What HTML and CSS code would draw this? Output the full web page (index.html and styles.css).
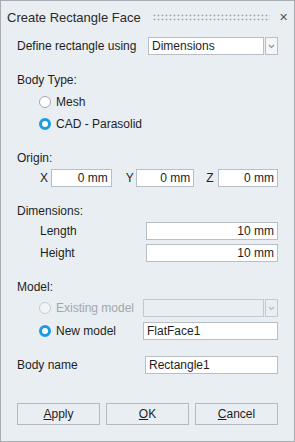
FILE: index.html
```html
<!DOCTYPE html>
<html>
<head>
<meta charset="utf-8">
<link rel="stylesheet" href="styles.css">
</head>
<body>
<div class="dialog">
  <div class="titlebar">
    <span class="title">Create Rectangle Face</span>
    <span class="grip"></span>
    <span class="close">&#x2715;</span>
  </div>
  <div class="content">
    <div class="row r-define">
      <span class="lbl define-lbl">Define rectangle using</span>
      <div class="combo define-combo"><span class="combo-text">Dimensions</span><span class="combo-btn"><svg width="7" height="5" viewBox="0 0 7 5"><path d="M1 1 L3.5 3.5 L6 1" fill="none" stroke="#8a9299" stroke-width="1.1"/></svg></span></div>
    </div>
    <div class="row head r-bodytype">Body Type:</div>
    <div class="row radio-row r-mesh"><span class="radio"></span><span>Mesh</span></div>
    <div class="row radio-row r-cad"><span class="radio on"></span><span>CAD - Parasolid</span></div>
    <div class="row head r-origin">Origin:</div>
    <div class="row origin-row">
      <span class="axis ax-x">X</span><div class="field num fx">0 mm</div>
      <span class="axis ax-y">Y</span><div class="field num fy">0 mm</div>
      <span class="axis ax-z">Z</span><div class="field num fz">0 mm</div>
    </div>
    <div class="row head r-dim">Dimensions:</div>
    <div class="row dim-row r-len"><span class="sub-lbl">Length</span><div class="field num dimf">10 mm</div></div>
    <div class="row dim-row r-hgt"><span class="sub-lbl">Height</span><div class="field num dimf">10 mm</div></div>
    <div class="row head r-model">Model:</div>
    <div class="row radio-row model-row r-exist"><span class="radio dis"></span><span class="dis-text mlbl">Existing model</span><div class="combo model-combo disabled"><span class="combo-text"></span><span class="combo-btn"><svg width="7" height="5" viewBox="0 0 7 5"><path d="M1 1 L3.5 3.5 L6 1" fill="none" stroke="#b4bac0" stroke-width="1.1"/></svg></span></div></div>
    <div class="row radio-row model-row r-new"><span class="radio on"></span><span class="mlbl">New model</span><div class="field txt model-field">FlatFace1</div></div>
    <div class="row r-body"><span class="lbl body-lbl">Body name</span><div class="field txt body-field">Rectangle1</div></div>
    <div class="buttons">
      <button class="btn"><u>A</u>pply</button>
      <button class="btn"><u>O</u>K</button>
      <button class="btn"><u>C</u>ancel</button>
    </div>
  </div>
</div>
</body>
</html>
```
FILE: styles.css
```css
* { box-sizing: border-box; }
html, body { margin: 0; padding: 0; }
body {
  width: 295px;
  height: 442px;
  font-family: "Liberation Sans", Arial, sans-serif;
  font-size: 12px;
  color: #1e1e1e;
  background: #e9eef2;
}
.dialog {
  width: 295px;
  height: 442px;
  border: 1px solid #a7adb3;
  background: #e9eef2;
  display: flex;
  flex-direction: column;
}
.titlebar {
  height: 31px;
  display: flex;
  align-items: center;
  padding-left: 6px;
  padding-top: 1px;
}
.title {
  font-size: 13px;
  color: #2a2a2a;
  width: 146px;
}
.grip {
  width: 117px;
  height: 8px;
  background-image: radial-gradient(circle at 1.5px 1.5px, #9aa0a6 0.8px, transparent 1.1px);
  background-size: 4px 4px;
  margin-top: 1px;
}
.close {
  margin-left: 9px;
  font-size: 11px;
  color: #555;
}
.content {
  padding-left: 16px;
  padding-right: 16px;
  display: flex;
  flex-direction: column;
}
.row {
  height: 18px;
  display: flex;
  align-items: center;
}
.r-define { margin-top: 5px; }
.define-lbl { width: 131px; }
.combo {
  display: flex;
  height: 18px;
}
.combo-text {
  flex: 1;
  background: #fff;
  border: 1px solid #b7bec5;
  padding-left: 3px;
  line-height: 16px;
}
.combo-btn {
  width: 13px;
  margin-left: 1px;
  border: 1px solid #b7bec5;
  background: #f4f6f8;
  display: flex;
  align-items: center;
  justify-content: center;
}
.define-combo { width: 130px; }
.r-bodytype { margin-top: 16px; }
.radio-row { padding-left: 22px; }
.r-mesh { margin-top: 4px; }
.r-cad { margin-top: 4px; }
.radio {
  width: 12px;
  height: 12px;
  border-radius: 50%;
  border: 1px solid #a3a9af;
  background: #fff;
  margin-right: 5px;
  flex: none;
}
.radio.on {
  border: 3.5px solid #1a9be2;
  background: #fff;
}
.radio.dis {
  border-color: #c6cbd0;
  background: #f2f4f6;
}
.dis-text { color: #a2a6aa; }
.r-origin { margin-top: 16px; }
.origin-row { margin-top: 2px; padding-left: 23px; }
.axis { width: 11px; }
.field {
  height: 18px;
  background: #fff;
  border: 1px solid #b7bec5;
  line-height: 16px;
}
.num { text-align: right; padding-right: 3px; }
.txt { padding-left: 3px; }
.fx { width: 61px; margin-right: 14px; }
.ax-y { width: 10px; }
.fy { width: 59px; margin-right: 12px; }
.ax-z { width: 12px; }
.fz { width: 60px; }
.r-dim { margin-top: 15px; }
.dim-row { padding-left: 23px; }
.r-len { margin-top: 2px; }
.r-hgt { margin-top: 4px; }
.sub-lbl { width: 106px; }
.dimf { width: 132px; }
.r-model { margin-top: 16px; }
.r-exist { margin-top: 3px; }
.r-new { margin-top: 5px; }
.mlbl { width: 87px; }
.model-combo { width: 135px; }
.model-combo.disabled .combo-text { background: #e9eef2; border-color: #c3c9ce; }
.model-combo.disabled .combo-btn { background: #e9eef2; border-color: #c3c9ce; }
.model-field { width: 135px; }
.r-body { margin-top: 16px; }
.body-lbl { width: 128px; }
.body-field { width: 133px; }
.buttons {
  margin-top: 29px;
  display: flex;
  gap: 6px;
}
.btn {
  width: 84px;
  height: 22px;
  border: 1px solid #b3b9bf;
  background: #e9eef2;
  font-family: "Liberation Sans", Arial, sans-serif;
  font-size: 12px;
  color: #1e1e1e;
  padding: 0;
}
.btn u { text-decoration-thickness: 1px; text-underline-offset: 1px; }
```
